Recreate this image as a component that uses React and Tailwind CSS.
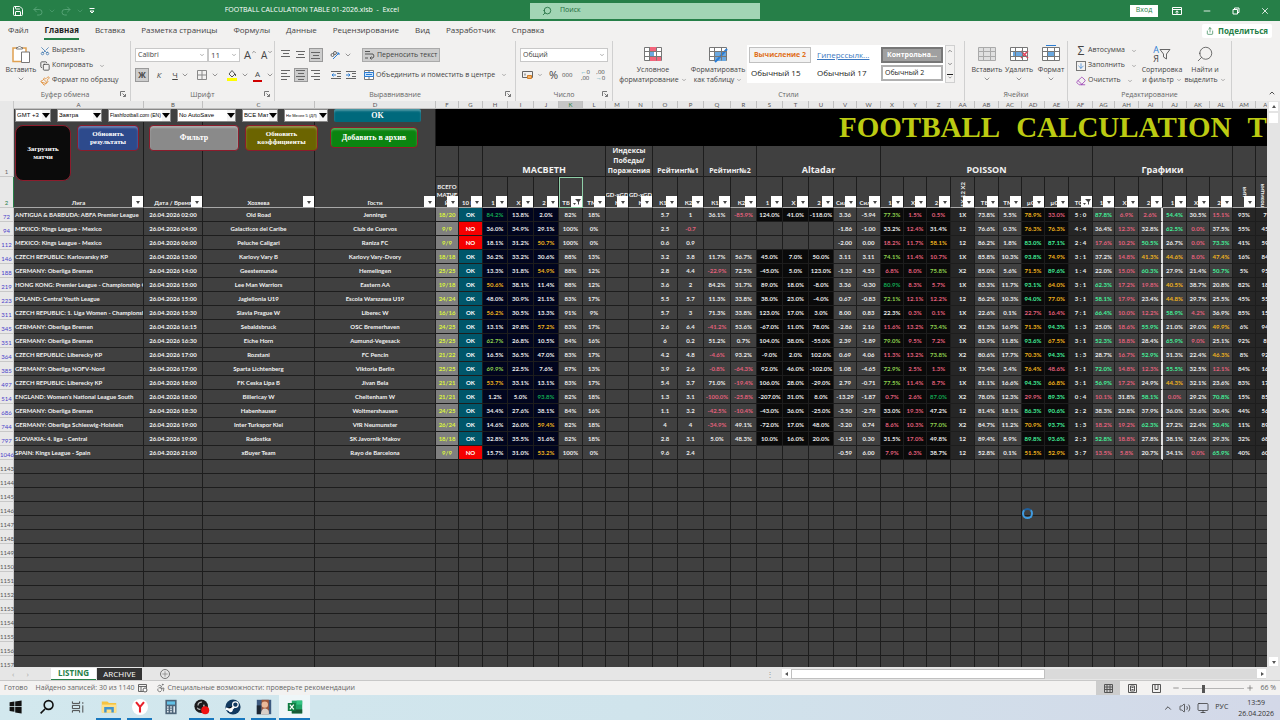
import React from 'react';
import {
  Accessibility,
  ArrowDown,
  ChevronDown,
  ChevronUp,
  Copy,
  Eraser,
  Minus,
  Monitor,
  Paintbrush,
  Plus,
  Redo2,
  Save,
  Scissors,
  Search,
  Share,
  Undo2,
  Volume2,
  X,
} from 'lucide-react';

const COLUMNS = [
  ['A', 130], ['B', 59], ['C', 112], ['D', 121], ['F', 23], ['G', 24], ['H', 25], ['I', 26], ['J', 25],
  ['K', 24], ['L', 23], ['M', 23], ['N', 24], ['O', 25], ['P', 26], ['Q', 27], ['R', 26], ['S', 26],
  ['T', 26], ['U', 25], ['V', 23], ['W', 24], ['X', 23], ['Y', 23], ['Z', 24], ['AA', 24], ['AB', 24],
  ['AC', 23], ['AD', 23], ['AE', 24], ['AF', 24], ['AG', 22], ['AH', 24], ['AI', 24], ['AJ', 24],
  ['AK', 23], ['AL', 23], ['AM', 23], ['AN', 24],
];

const SUBHEADS = [
  'Лига', 'Дата / Время', 'Хозяева', 'Гости', '', '10 И', '1', 'X', '2', 'ТБ 2', 'ТМ', '', '', 'К1', 'К2',
  'К1', 'К2', '1', 'X', '2', 'Сила', 'Сила', '1', 'X', '2', '', 'ТБ', 'ТМ', 'μG', 'μG', 'ТС', '1', 'X', '2',
  '1', 'X', '2', '', '',
];

// number | league | time | home | away | values of F..AN, "-" is an empty cell
const SOURCE = `72|ANTIGUA & BARBUDA: ABFA Premier League|02:00|Old Road|Jennings|18/20 OK 84.2% 13.8% 2.0% 82% 18% - - 5.7 1 36.1% -85.9% 124.0% 41.0% -118.0% 3.36 -5.94 77.3% 1.5% 0.5% 1X 73.8% 5.5% 78.9% 33.0% 5:0 87.8% 6.9% 2.6% 54.4% 30.5% 15.1% 93% 7%
94|MEXICO: Kings League - Mexico|04:00|Galacticos del Caribe|Club de Cuervos|9/9 NO 36.0% 34.9% 29.1% 100% 0% - - 2.5 -0.7 - - - - - -1.86 -1.00 33.2% 12.4% 31.4% 12 76.6% 0.3% 76.3% 76.3% 4:4 36.4% 12.3% 32.8% 62.5% 0.0% 37.5% 55% 45%
112|MEXICO: Kings League - Mexico|06:00|Peluche Caligari|Raniza FC|9/9 NO 18.1% 31.2% 50.7% 100% 0% - - 0.6 0.9 - - - - - -2.00 0.00 18.2% 11.7% 58.1% 12 86.2% 1.8% 83.0% 87.1% 2:4 17.6% 10.2% 50.5% 26.7% 0.0% 73.3% 41% 59%
146|CZECH REPUBLIC: Karlovarsky KP|13:00|Karlovy Vary B|Karlovy Vary-Dvory|18/18 OK 36.2% 33.2% 30.6% 88% 13% - - 3.2 3.8 11.7% 56.7% 45.0% 7.0% 50.0% 3.11 3.11 74.1% 11.4% 10.7% 1X 85.8% 10.3% 93.8% 74.9% 3:1 37.2% 14.8% 41.3% 44.6% 8.0% 47.4% 16% 84%
188|GERMANY: Oberliga Bremen|14:00|Geestemunde|Hemelingen|25/25 OK 13.3% 31.8% 54.9% 88% 12% - - 2.8 4.4 -22.9% 72.5% -45.0% 5.0% 123.0% -1.33 4.53 6.8% 8.0% 75.8% X2 85.0% 5.6% 71.5% 89.6% 1:4 22.0% 15.0% 60.3% 27.9% 21.4% 50.7% 5% 95%
219|HONG KONG: Premier League - Championship Group|15:00|Lee Man Warriors|Eastern AA|19/18 OK 50.6% 38.1% 11.4% 88% 12% - - 3.6 2 84.2% 31.7% 89.0% 18.0% -8.0% 3.36 -0.30 80.9% 8.3% 5.7% 1X 83.3% 11.7% 93.1% 64.0% 3:1 62.3% 17.2% 19.8% 40.5% 38.7% 20.8% 82% 18%
223|POLAND: Central Youth League|15:00|Jagiellonia U19|Escola Warszawa U19|24/24 OK 48.0% 30.9% 21.1% 83% 17% - - 5.5 5.7 11.3% 33.8% 38.0% 23.0% -4.0% 0.67 -0.83 72.1% 12.1% 12.2% 12 86.2% 10.3% 94.0% 77.0% 3:1 58.1% 17.9% 23.4% 44.8% 29.7% 25.5% 45% 55%
311|CZECH REPUBLIC: 1. Liga Women - Championship Group|15:30|Slavia Prague W|Liberec W|16/16 OK 56.2% 30.5% 13.3% 91% 9% - - 5.7 3 71.3% 33.8% 123.0% 17.0% 3.0% 8.00 0.83 22.3% 0.3% 0.1% 1X 22.6% 0.1% 22.7% 16.4% 7:1 66.4% 10.0% 12.2% 58.9% 4.2% 36.9% 85% 15%
345|GERMANY: Oberliga Bremen|16:15|Sebaldsbruck|OSC Bremerhaven|24/25 OK 13.1% 29.8% 57.2% 83% 17% - - 2.6 6.4 -41.2% 53.6% -67.0% 11.0% 78.0% -2.86 2.16 11.6% 13.2% 73.4% X2 81.3% 16.9% 71.3% 94.3% 1:3 25.0% 18.6% 55.9% 21.0% 29.0% 49.9% 6% 94%
351|GERMANY: Oberliga Bremen|16:30|Eiche Horn|Aumund-Vegesack|25/25 OK 62.7% 26.8% 10.5% 84% 16% - - 6 0.2 51.2% 0.7% 104.0% 38.0% -55.0% 2.39 -1.89 79.0% 9.5% 7.2% 1X 83.9% 11.8% 93.6% 67.5% 3:1 52.3% 18.8% 28.4% 65.9% 9.0% 25.1% 92% 8%
364|CZECH REPUBLIC: Liberecky KP|17:00|Rozstani|FC Pencin|21/22 OK 16.5% 36.5% 47.0% 83% 17% - - 4.2 4.8 -4.6% 93.2% -9.0% 2.0% 102.0% 0.69 4.06 11.3% 13.2% 73.8% X2 80.6% 17.7% 70.3% 94.3% 1:3 28.7% 16.7% 52.9% 31.3% 22.4% 46.3% 8% 92%
385|GERMANY: Oberliga NOFV-Nord|17:00|Sparta Lichtenberg|Viktoria Berlin|25/25 OK 69.9% 22.5% 7.6% 87% 13% - - 3.9 2.6 -0.8% -64.3% 92.0% 46.0% -102.0% 1.08 -4.65 72.9% 2.5% 1.3% 1X 73.4% 3.4% 76.4% 48.6% 5:1 72.0% 14.8% 12.3% 55.5% 32.5% 12.1% 84% 16%
497|CZECH REPUBLIC: Liberecky KP|18:00|FK Ceska Lipa B|Jivan Bela|21/21 OK 53.7% 33.1% 13.1% 83% 17% - - 5.4 3.7 71.0% -19.4% 106.0% 28.0% -29.0% 2.79 -0.71 77.5% 11.4% 8.7% 1X 81.1% 16.6% 94.3% 66.8% 3:1 56.9% 17.2% 24.9% 44.3% 32.1% 23.6% 83% 17%
514|ENGLAND: Women's National League South|18:00|Billericay W|Cheltenham W|21/21 OK 1.2% 5.0% 93.8% 82% 18% - - 1.3 3.1 -100.0% -25.8% -207.0% 31.0% 8.0% -13.29 -1.87 0.7% 2.6% 87.0% X2 78.0% 12.3% 29.9% 89.3% 0:4 10.1% 31.8% 58.1% 0.0% 29.2% 70.8% 15% 85%
686|GERMANY: Oberliga Bremen|18:30|Habenhauser|Woltmershausen|24/25 OK 34.4% 27.6% 38.1% 84% 16% - - 1.1 3.2 -42.5% -10.4% -43.0% 36.0% -25.0% -3.50 -2.78 33.0% 19.3% 47.2% 12 81.4% 18.1% 86.3% 90.6% 2:2 38.3% 23.8% 37.9% 36.0% 33.6% 30.4% 44% 56%
744|GERMANY: Oberliga Schleswig-Holstein|19:00|Inter Turkspor Kiel|VfR Neumunster|26/24 OK 14.6% 26.0% 59.4% 82% 18% - - 4 4 -34.9% 49.1% -72.0% 17.0% 48.0% -3.20 0.74 8.6% 10.3% 77.0% X2 84.7% 11.2% 70.9% 93.7% 1:3 18.2% 19.2% 62.3% 27.2% 22.4% 50.4% 11% 89%
797|SLOVAKIA: 4. liga - Central|19:00|Radostka|SK Javornik Makov|18/18 OK 32.8% 35.5% 31.6% 82% 18% - - 2.8 3.1 5.0% 48.3% 10.0% 16.0% 20.0% -0.15 0.30 31.5% 17.0% 49.8% 12 89.4% 8.9% 89.8% 93.6% 2:3 52.8% 18.8% 27.8% 38.1% 32.6% 29.3% 32% 68%
1046|SPAIN: Kings League - Spain|21:00|xBuyer Team|Rayo de Barcelona|9/9 NO 15.7% 31.0% 53.2% 100% 0% - - 9.6 2.4 - - - - - -0.59 6.00 7.9% 6.3% 38.7% 12 52.8% 0.1% 51.5% 52.9% 3:7 13.5% 5.8% 20.7% 34.1% 0.0% 65.9% 40% 60%`;

const MATCHES = SOURCE.split('\n').map((line) => {
  const [id, league, time, home, away, values] = line.split('|');
  return { id, league, time, home, away, values: values.split(' ') };
});

const EMPTY_ROWS = Array.from({ length: 15 }, (_, i) => 1143 + i);

const PINK = 'text-[#e2607c]';
const MINT = 'text-[#43f09a]';
const AMBER = 'text-[#f0b41e]';
const LIME = 'text-[#8fd14f]';
const GREEN = 'text-[#12a852]';
const WHITE = 'text-[#ececec]';

function cellStyle(col, value) {
  const n = parseFloat(value);
  if (col === 'F') return 'bg-[#7f7f7f] text-[#dcf53c]';
  if (col === 'G') return value === 'NO' ? 'bg-[#f50000] text-white' : 'bg-[#00566a] text-white';
  if ('HIJ'.includes(col)) {
    return 'bg-[#01051e] ' + (n >= 80 ? GREEN : n >= 60 ? LIME : n >= 50 ? AMBER : WHITE);
  }
  if ('PQR'.includes(col)) return 'bg-[#404040] ' + (n < 0 ? PINK : WHITE);
  if ('STU'.includes(col)) return (value === '-' ? 'bg-[#404040] ' : 'bg-[#0a0a0a] ') + WHITE;
  if ('XYZ'.includes(col)) {
    return 'bg-[#0a0a0a] ' + (n >= 80 ? GREEN : n >= 60 ? LIME : n >= 50 ? AMBER : n < 20 ? PINK : WHITE);
  }
  if (col === 'AD' || col === 'AE') return 'bg-[#0a0a0a] ' + (n >= 80 ? MINT : n >= 50 ? AMBER : PINK);
  if (['AA', 'AF', 'AM', 'AN'].includes(col)) return 'bg-[#262626] ' + WHITE;
  if (['AG', 'AH', 'AI', 'AJ', 'AK', 'AL'].includes(col)) {
    return 'bg-[#404040] ' + (n >= 50 ? MINT : n >= 40 ? AMBER : n < 20 ? PINK : WHITE);
  }
  return 'bg-[#404040] ' + WHITE;
}

function Arrow({ className = 'size-2' }) {
  return <ChevronDown className={`${className} shrink-0 text-[#666]`} strokeWidth={2} />;
}

function TitleBar() {
  return (
    <header className="flex h-[21px] shrink-0 items-center bg-[#267f48] text-[7px] text-white">
      <div className="flex flex-1 items-center">
        <button aria-label="Сохранить" className="ml-3"><Save className="size-3" strokeWidth={2} /></button>
        <button aria-label="Отменить" className="ml-2 flex items-center text-[#55a275]"><Undo2 className="size-3" /><ChevronDown className="ml-1 size-2" /></button>
        <button aria-label="Вернуть" className="ml-1 flex items-center text-[#55a275]"><Redo2 className="size-3" /><ChevronDown className="ml-1 size-2" /></button>
        <button aria-label="Настройка панели" className="ml-1">
          <svg viewBox="0 0 8 8" className="size-2" fill="none" stroke="currentColor"><path d="M1.500 1.500h5M2 4l2 2 2-2z" /></svg>
        </button>
        <span className="mr-[131px] ml-auto">FOOTBALL CALCULATION TABLE 01-2026.xlsb&nbsp; - &nbsp;Excel</span>
      </div>
      <label className="flex h-4 w-[230px] items-center gap-2 bg-[#a2d5b5] px-3 text-[#1d6b3c]">
        <Search className="size-2.5 shrink-0 -scale-x-100" strokeWidth={2} />
        <input aria-label="Поиск" placeholder="Поиск" className="w-full bg-transparent outline-none placeholder:text-[#1d6b3c]" />
      </label>
      <div className="flex w-[520px] items-center justify-end">
        <button className="h-3 w-7 bg-white text-[#267f48]">Вход</button>
        <button aria-label="Параметры ленты" className="ml-3.5">
          <svg viewBox="0 0 10 8" className="h-2 w-2.5" fill="none" stroke="currentColor"><path d="M.5.500h9v7h-9zM.500 2.500h9M5 7V4M3.500 5.200 5 3.800l1.500 1.400" /></svg>
        </button>
        <button aria-label="Свернуть" className="ml-5"><Minus className="size-2.5" /></button>
        <button aria-label="Восстановить" className="ml-5">
          <svg viewBox="0 0 8 8" className="size-2" fill="none" stroke="currentColor"><path d="M1 2.500h4.500V7H1zM2.500 2.500V1H7v4.500H5.500" /></svg>
        </button>
        <button aria-label="Закрыть" className="mr-2.5 ml-5"><X className="size-2.5" /></button>
      </div>
    </header>
  );
}

const TABS = ['Файл', 'Главная', 'Вставка', 'Разметка страницы', 'Формулы', 'Данные', 'Рецензирование', 'Вид', 'Разработчик', 'Справка'];

function TabBar() {
  return (
    <nav className="flex h-5 shrink-0 items-center gap-4 pr-2 pl-2 text-[8px] text-[#444]">
      {TABS.map((tab) => (
        <button
          key={tab}
          className={tab === 'Главная' ? 'border-b-2 border-[#267f48] leading-4 font-bold text-[#222]' : 'border-b-2 border-transparent leading-4'}
        >
          {tab}
        </button>
      ))}
      <button className="ml-auto flex h-3.5 items-center gap-1 rounded-xs bg-white px-1 font-bold text-[#267f48]">
        <Share className="size-2" />Поделиться
      </button>
    </nav>
  );
}

function Group({ title, className, launcher, children }) {
  return (
    <section className={`relative flex shrink-0 flex-col border-r border-[#d0d0d0] ${className}`}>
      <div className="flex flex-1 items-start pt-0.5">{children}</div>
      <div className="flex h-3 items-center justify-center text-[7px] text-[#666]">{title}</div>
      {launcher && (
        <button aria-label={`${title}: параметры`} className="absolute right-1 bottom-1">
          <svg viewBox="0 0 6 6" className="size-1.5" fill="none" stroke="#777"><path d="M.5 5V.500H5M2.500 2.500l3 3M5.500 3v2.500H3" /></svg>
        </button>
      )}
    </section>
  );
}

function Lines({ rows, active, label }) {
  return (
    <button aria-label={label} className={`flex size-3.5 items-center justify-center ${active ? 'border border-[#999] bg-[#cdcdcd]' : ''}`}>
      <svg viewBox="0 0 10 10" className="size-2.5 shrink-0" stroke="#666">
        {rows.map(([x, y, w]) => <path key={y} d={`M${x} ${y}.500h${w}`} />)}
      </svg>
    </button>
  );
}

function Indent({ back }) {
  return (
    <button aria-label={back ? 'Уменьшить отступ' : 'Увеличить отступ'} className="flex size-3.5 items-center justify-center">
      <svg viewBox="0 0 10 10" className="size-2.5" fill="none" stroke="#666">
        <path d="M0 1.500h10M6 3.500h4M6 6.500h4M0 8.500h10" />
        <path stroke="#2b7cd3" d={back ? 'M5 5H1M2.500 3.500 1 5l1.500 1.500' : 'M0 5h4M2.500 3.500 4 5 2.500 6.500'} />
      </svg>
    </button>
  );
}

// small spreadsheet grid with optional coloured parts
function GridIcon({ children, gray }) {
  return (
    <svg viewBox="0 0 20 18" className="h-[18px] w-5" fill="none" stroke={gray ? '#aaa' : '#777'}>
      <path fill={gray ? '#e0e0e0' : '#fff'} d="M1.500 2.500h17v13h-17z" />
      {children}
      <path d="M1.500 6.500h17M1.500 11.500h17M6.500 2.500v13M13.500 2.500v13" />
    </svg>
  );
}

function BigButton({ icon, lines, className = '', arrowBelow }) {
  return (
    <button className={`flex shrink-0 flex-col items-center pt-0.5 text-[7px] leading-[10px] text-[#444] ${className}`}>
      {icon}
      <span className="mt-0.5 whitespace-nowrap">{lines[0]}</span>
      {arrowBelow ? <Arrow /> : <span className="flex items-center gap-0.5 whitespace-nowrap">{lines[1]}<Arrow className="size-1.5" /></span>}
    </button>
  );
}

function SmallButton({ icon, children, arrow }) {
  return (
    <button className="flex h-[15px] items-center gap-0.5 text-[7px] whitespace-nowrap text-[#444]">
      {icon}
      {children}
      {arrow && <Arrow className="ml-1 size-1.5" />}
    </button>
  );
}

function Ribbon() {
  return (
    <div className="flex h-[60px] shrink-0 overflow-hidden">
      <Group title="Буфер обмена" className="w-[131px]" launcher>
        <BigButton
          className="w-[38px] pl-1"
          arrowBelow
          lines={['Вставить']}
          icon={
            <svg viewBox="0 0 18 18" className="size-[18px]" fill="#fff">
              <path stroke="#e0a050" strokeWidth="1.500" d="M1 3h13v13.500H1z" />
              <path stroke="#777" d="M4.500 4V2.500H6q1.500-3 3 0h1.500V4z" />
              <path stroke="#777" d="M9.500 7h8v10.500h-8z" />
            </svg>
          }
        />
        <div className="ml-0.5 flex flex-col">
          <SmallButton icon={<Scissors className="size-2.5 -rotate-90 text-[#4a7fb5]" />}>Вырезать</SmallButton>
          <SmallButton arrow icon={<Copy className="size-2.5" />}>Копировать</SmallButton>
          <SmallButton icon={<Paintbrush className="size-2.5 text-[#e08a30]" />}>Формат по образцу</SmallButton>
        </div>
      </Group>

      <Group title="Шрифт" className="w-36" launcher>
        <div className="flex flex-col gap-1.5 pt-[5px] pl-1 text-[8px] text-[#444]">
          <div className="flex h-3.5 items-center">
            <label className="relative flex h-3.5 w-[73px] items-center border border-[#c8c8c8] bg-white text-[7px]">
              <select aria-label="Шрифт" className="w-full appearance-none bg-transparent pl-0.5 outline-none"><option>Calibri</option></select>
              <Arrow className="absolute right-0.5 size-1.5" />
            </label>
            <label className="relative flex h-3.5 w-8 items-center border border-[#c8c8c8] bg-white">
              <select aria-label="Размер шрифта" className="w-full appearance-none bg-transparent pl-0.5 outline-none"><option>11</option></select>
              <Arrow className="absolute right-0.5 size-1.5" />
            </label>
            <button aria-label="Увеличить размер" className="ml-1 flex text-[11px] leading-3">A<ChevronUp className="size-1.5" /></button>
            <button aria-label="Уменьшить размер" className="ml-1 flex text-[10px] leading-3">A<ChevronDown className="size-1.5" /></button>
          </div>
          <div className="flex h-3.5 items-center">
            <button className="size-3.5 border border-[#999] bg-[#cdcdcd] leading-3 font-bold">Ж</button>
            <button className="ml-1 w-3 italic">К</button>
            <button className="ml-1 w-3 underline">Ч</button>
            <Arrow />
            <button aria-label="Границы" className="ml-2 flex items-center gap-1">
              <svg viewBox="0 0 10 10" className="size-2.5" fill="none" stroke="#888"><path d="M.5.500h9v9h-9zM5 .500v9M.500 5h9" /></svg>
              <Arrow />
            </button>
            <button aria-label="Цвет заливки" className="ml-2 flex items-center gap-1">
              <svg viewBox="0 0 10 12" className="h-3 w-2.5" fill="none" stroke="#555"><path d="M2 5l3-3.500L8 5 5 8zM8.500 5v2" /><path fill="#ff0" stroke="none" d="M0 9h10v3H0z" /></svg>
              <Arrow />
            </button>
            <button aria-label="Цвет текста" className="ml-1 flex items-center gap-1">
              <span className="h-3.5 border-b-2 border-[#d00000] px-0.5 leading-3">A</span>
              <Arrow />
            </button>
          </div>
        </div>
      </Group>

      <Group title="Выравнивание" className="w-[241px]" launcher>
        <div className="flex flex-col gap-1.5 pt-[5px] pl-1">
          <div className="flex h-3.5 items-center gap-px">
            <Lines label="По верхнему краю" rows={[[0, 0, 9], [2, 3, 6], [0, 6, 9]]} />
            <Lines label="По середине" rows={[[0, 1, 9], [2, 4, 6], [0, 7, 9]]} />
            <Lines label="По нижнему краю" active rows={[[0, 2, 9], [2, 5, 6], [0, 8, 9]]} />
            <button aria-label="Ориентация" className="ml-1.5 flex items-center gap-1">
              <svg viewBox="0 0 10 10" className="size-2.5" fill="none" stroke="#666"><circle cx="2.500" cy="5" r="1.500" /><circle cx="5" cy="3" r="1.500" /><path stroke="#2b7cd3" d="M3 9l6-6M7 3h2v2" /></svg>
              <Arrow />
            </button>
          </div>
          <div className="flex h-3.5 items-center gap-px">
            <Lines label="По левому краю" rows={[[0, 0, 9], [0, 3, 6], [0, 6, 9], [0, 9, 6]]} />
            <Lines label="По центру" active rows={[[0, 0, 9], [2, 3, 6], [0, 6, 9], [2, 9, 6]]} />
            <Lines label="По правому краю" rows={[[0, 0, 9], [3, 3, 6], [0, 6, 9], [3, 9, 6]]} />
            <span className="w-1" />
            <Indent back />
            <Indent />
          </div>
        </div>
        <div className="ml-1 flex flex-col items-start gap-1.5 pt-[5px] text-[7px] whitespace-nowrap text-[#444]">
          <button className="flex h-3.5 items-center gap-0.5 border border-[#aaa] bg-[#cdcdcd] px-0.5">
            <svg viewBox="0 0 10 10" className="size-2.5" fill="none" stroke="#555"><path d="M0 1.500h5M0 4h8q2 2 0 4H5M6.500 6.500 5 8l1.500 1.500M0 8h3" /></svg>
            Переносить текст
          </button>
          <button className="flex h-3.5 items-center gap-0.5 px-0.5">
            <svg viewBox="0 0 10 10" className="size-2.5" fill="#fff" stroke="#777"><path d="M.5.500h9v9h-9zM5 .500v2M5 7v2.500" /><path fill="#cfe4f7" stroke="#2b7cd3" d="M.5 2.500h9v4h-9zM2 4.500h6" /></svg>
            Объединить и поместить в центре
            <Arrow className="ml-1 size-1.5" />
          </button>
        </div>
      </Group>

      <Group title="Число" className="w-[97px]" launcher>
        <div className="flex flex-col gap-1.5 pt-[5px] pl-1 text-[7px] text-[#444]">
          <label className="relative flex h-3.5 w-[88px] items-center border border-[#c8c8c8] bg-white">
            <select aria-label="Числовой формат" className="w-full appearance-none bg-transparent pl-0.5 outline-none"><option>Общий</option></select>
            <Arrow className="absolute right-0.5 size-1.5" />
          </label>
          <div className="flex h-3.5 items-center pl-0.5">
            <svg viewBox="0 0 11 10" className="h-2.5 w-[11px]" fill="none" stroke="#666"><path d="M.5 1.500h10v6H.500zM3 3.500v2" /><path fill="#f7b267" stroke="#d0802c" d="M5.500 5.500h4v3h-4z" /></svg>
            <Arrow className="ml-1 size-1.5" />
            <button className="ml-1.5 text-[11px]">%</button>
            <button className="ml-1 text-[6px]">000</button>
            <button className="ml-2 text-[6px] leading-[6px]"><span className="text-[#2b9ab0]">←</span>0<br />,00</button>
            <button className="ml-1.5 text-[6px] leading-[6px]">,00<br /><span className="text-[#2b9ab0]">→</span>0</button>
          </div>
        </div>
      </Group>

      <Group title="Стили" className="w-[352px]">
        <BigButton
          className="w-20"
          lines={['Условное', 'форматирование']}
          icon={<GridIcon><path fill="#f2647a" stroke="none" d="M7 2h7v4H7zM7 12h11v4H7z" /><path fill="#6aa8e0" stroke="none" d="M7 7h4v4H7z" /></GridIcon>}
        />
        <BigButton
          className="w-[50px]"
          lines={['Форматировать', 'как таблицу']}
          icon={<GridIcon><path fill="#6aa8e0" stroke="none" d="M7 7h11v9H7z" /><path stroke="#2b7cd3" strokeWidth="2" d="M19 4l-9 10-3 3" /></GridIcon>}
        />
        <div className="mt-0.5 ml-1 flex bg-white text-[8px] text-[#222]">
          <div className="grid w-[198px] grid-cols-3 gap-x-1 gap-y-0.5 px-0.5 py-0.5">
            <button className="h-4 border border-[#c0c0c0] bg-[#f2f2f2] text-[7px] leading-3 font-bold whitespace-nowrap text-[#e0701c]">Вычисление 2</button>
            <button className="h-4 px-0.5 text-left whitespace-nowrap text-[#3c78c0] underline">Гиперссылк...</button>
            <button className="h-4 border-2 border-[#777] bg-[#a0a0a0] text-[7px] leading-3 font-bold whitespace-nowrap text-white">Контрольна...</button>
            <button className="h-4 px-0.5 text-left">Обычный 15</button>
            <button className="h-4 px-0.5 text-left">Обычный 17</button>
            <button className="h-4 border-2 border-[#b0b0b0] px-0.5 text-left text-[7px] leading-3">Обычный 2</button>
          </div>
          <div className="flex w-2.5 flex-col items-center justify-between border border-[#d0d0d0] bg-[#f3f2f1] py-0.5">
            <button aria-label="Выше"><ChevronUp className="size-1.5" /></button>
            <button aria-label="Ниже"><ChevronDown className="size-1.5" /></button>
            <button aria-label="Все стили"><ChevronDown className="size-1.5 border-t" /></button>
          </div>
        </div>
      </Group>

      <Group title="Ячейки" className="w-[103px]">
        <div className="flex pl-1.5">
          <BigButton className="w-8" arrowBelow lines={['Вставить']} icon={<GridIcon gray />} />
          <BigButton
            className="w-8"
            arrowBelow
            lines={['Удалить']}
            icon={<GridIcon><path fill="#6aa8e0" stroke="none" d="M4 7h9v4H4z" /><path stroke="#e0405a" strokeWidth="1.500" d="M12 6l7 7M19 6l-7 7" /></GridIcon>}
          />
          <BigButton
            className="w-8"
            arrowBelow
            lines={['Формат']}
            icon={<GridIcon><path fill="#6aa8e0" stroke="none" d="M6 7h8v4H6z" /><path stroke="#2b7cd3" d="M5 .500h10" /></GridIcon>}
          />
        </div>
      </Group>

      <Group title="Редактирование" className="w-[164px]">
        <div className="flex w-[71px] shrink-0 flex-col pl-2">
          <SmallButton arrow icon={<span className="w-2.5 text-[12px] leading-3">Σ</span>}>Автосумма</SmallButton>
          <SmallButton arrow icon={<ArrowDown className="size-2.5 shrink-0 border border-[#777] text-[#2b7cd3]" />}>Заполнить</SmallButton>
          <SmallButton arrow icon={<Eraser className="size-2.5 shrink-0 text-[#9b3fb5]" />}>Очистить</SmallButton>
        </div>
        <BigButton
          className="w-[46px]"
          lines={['Сортировка', 'и фильтр']}
          icon={
            <span className="flex h-[18px] items-center">
              <span className="flex flex-col text-[9px] leading-[9px]"><span className="text-[#2b7cd3]">А</span><span>Я</span></span>
              <svg viewBox="0 0 12 12" className="size-3" fill="none" stroke="#666"><path d="M1 1.500h10L7.500 6v5l-3-2V6z" /></svg>
            </span>
          }
        />
        <BigButton className="w-10" lines={['Найти и', 'выделить']} icon={<Search className="size-[18px] -scale-x-100" strokeWidth={1} />} />
      </Group>
      <button aria-label="Свернуть ленту" className="mt-auto mr-1 mb-1 ml-auto"><ChevronUp className="size-2" /></button>
    </div>
  );
}

function SheetSelect({ label, value, className }) {
  return (
    <label className={`relative flex h-[13px] items-center border border-[#888] bg-white text-black ${className}`}>
      <select aria-label={label} className="w-full appearance-none bg-transparent pr-2 pl-px outline-none"><option>{value}</option></select>
      <span className="pointer-events-none absolute right-0 flex h-full w-2 items-center justify-center bg-[#f4f4f4]">
        <svg viewBox="0 0 8 5" className="h-[5px] w-2"><path d="M0 0h8L4 5z" /></svg>
      </span>
    </label>
  );
}

function Controls() {
  const button = 'rounded-sm border border-[#8c1c2c] text-white shadow-[inset_0_2px_2px_rgba(255,255,255,0.3)]';
  return (
    <div className="absolute top-2 left-[15px] flex flex-col gap-[3px]">
      <div className="flex items-center gap-1.5 font-['Liberation_Sans',sans-serif] text-[6px]">
        <SheetSelect label="Часовой пояс" value="GMT +3" className="w-9" />
        <SheetSelect label="День" value="Завтра" className="w-[45px]" />
        <SheetSelect label="Источник" value="Flashfootball.com (EN)" className="w-[63px] text-[5px]" />
        <SheetSelect label="Автосохранение" value="No AutoSave" className="w-[59px]" />
        <SheetSelect label="Матчи" value="ВСЕ Мат" className="w-9" />
        <SheetSelect label="Минимум игр" value="Не Менее 5 (ДЛ)" className="w-11 text-[4px]" />
        <button className="h-[13px] w-[87px] rounded-xs bg-[#00697c] font-['Liberation_Serif',serif] text-[8px] font-bold text-white shadow-[inset_0_2px_2px_rgba(255,255,255,0.3)]">OK</button>
      </div>
      <div className="flex items-start font-['Liberation_Serif',serif] text-[7px] leading-2 font-bold">
        <button className="h-14 w-14 rounded-lg border border-[#8c1c2c] bg-[#0b0b0b] text-white">Загрузить<br />матчи</button>
        <button className={`ml-1.5 h-[26px] w-[62px] bg-[#2d4a8c] ${button}`}>Обновить<br />результаты</button>
        <button className={`ml-2.5 h-[26px] w-[90px] bg-[#8a8a8a] text-[8px] ${button}`}>Фильтр</button>
        <button className={`ml-1.5 h-[26px] w-[73px] bg-[#6b6400] ${button}`}>Обновить<br />коэффициенты</button>
        <button className={`mt-0.5 ml-3 h-[21px] w-[88px] bg-[#0b8410] text-[8px] ${button}`}>Добавить в архив</button>
      </div>
    </div>
  );
}

const GROUPS = [
  ['', 1], ['', 1], ['MACBETH', 5, 'text-[9px]'], ['Индексы Победы/ Поражения', 2, 'text-[7px] leading-[10px]'],
  ['Рейтинг№1', 2, 'text-[7px]'], ['Рейтинг№2', 2, 'text-[7px]'], ['Altadar', 5, 'text-[9px]'],
  ['POISSON', 9, 'text-[9px]'], ['Графики', 6, 'text-[9px]'], ['', 1], ['', 1],
];

const EDGE = 'border-r border-b border-[#1d1d1d]';
const ROW_HEAD = 'border-r border-b border-[#c8c8c8] bg-[#e8e8e8] p-0 text-[6px] font-normal align-bottom leading-[8px]';

function FilterButton({ col }) {
  const active = col === 'K' || col === 'AF';
  return (
    <button aria-label={`Фильтр ${col}`} className="absolute right-0 bottom-0 flex size-[11px] items-center justify-center bg-white">
      <svg viewBox="0 0 8 8" className="size-2" fill="#444">
        {active ? <path d="M2 1h6L6 4v3L5 6V4zM0 5h3L1.500 7z" /> : <path d="M2 3h4L4 6z" />}
      </svg>
    </button>
  );
}

function SubHead({ col, text }) {
  let label = <span className={col > 'E' || col.length > 1 ? 'pr-1 whitespace-nowrap' : ''}>{text}</span>;
  if (col === 'F') label = <span>ВСЕГО<br />МАТЧЕ<br />Й</span>;
  if (col === 'M' || col === 'N') label = <span className="whitespace-nowrap">GD-xGD<br />К</span>;
  if (col === 'AA') label = <span className="inline-block rotate-180 whitespace-nowrap [writing-mode:vertical-rl]">1X 12 X2</span>;
  if (col === 'AM') label = <span className="mb-2.5 inline-block rotate-180 [writing-mode:vertical-rl]">ция</span>;
  if (col === 'AN') label = <span className="mr-3 inline-block rotate-180 [writing-mode:vertical-rl]">позиция</span>;
  return (
    <th className={`p-0 align-bottom ${EDGE} border-b-[#a8a8a8] ${col === 'K' ? 'outline outline-[#8fcfa8] -outline-offset-1' : ''}`}>
      <div className="relative flex h-[30px] items-end justify-center overflow-hidden text-[6px] leading-2 font-bold">
        {label}
        <FilterButton col={col} />
      </div>
    </th>
  );
}

function Sheet() {
  return (
    <div className="relative min-w-0 flex-1 overflow-hidden bg-[#404040]">
      <table className="w-[1280px] table-fixed border-separate border-spacing-0 font-['Lato','Open_Sans',sans-serif] text-[6px] text-[#f2f2f2]">
        <colgroup>
          <col className="w-3.5" />
          {COLUMNS.map(([name, width]) => <col key={name} style={{ width }} />)}
        </colgroup>
        <thead>
          <tr className="h-2 bg-[#e8e8e8] text-[#555]">
            <th className="border-r border-[#c8c8c8] p-0" />
            {COLUMNS.map(([name]) => (
              <th key={name} className={`border-r border-b border-[#c0c0c0] p-0 leading-[7px] font-normal ${name === 'K' ? 'bg-[#c6c6c6] text-[#267f48]' : ''}`}>{name}</th>
            ))}
          </tr>
          <tr className="h-[37px]">
            <th rowSpan={2} className={`${ROW_HEAD} text-[#666]`}>1</th>
            {['A', 'B', 'C', 'D'].map((name) => <td key={name} rowSpan={2} className="border-r border-[#1d1d1d] p-0" />)}
            <th colSpan={35} className="bg-black p-0 pl-[403px] text-left">
              <div className="flex gap-4 font-['Liberation_Serif',serif] text-[29px] leading-[37px] font-bold whitespace-nowrap text-[#bccb12]">
                <span>FOOTBALL</span><span>CALCULATION</span><span>T</span>
              </div>
            </th>
          </tr>
          <tr className="h-[31px] font-['Open_Sans','Noto_Sans',sans-serif]">
            {GROUPS.map(([title, span, size], i) => (
              <th key={i} colSpan={span} className={`p-0 align-bottom font-bold ${EDGE}`}>
                <div className={`flex h-[30px] items-end justify-center px-0.5 text-center ${size || ''}`}>{title}</div>
              </th>
            ))}
          </tr>
          <tr className="h-[31px]">
            <th className={`${ROW_HEAD} border-r-[#267f48] bg-[#d0d0d0] text-[#267f48]`}>2</th>
            {COLUMNS.map(([name], i) => <SubHead key={name} col={name} text={SUBHEADS[i]} />)}
          </tr>
        </thead>
        <tbody>
          {MATCHES.map((m) => (
            <tr key={m.id} className="h-3.5 text-center font-bold">
              <th className={`${ROW_HEAD} text-[#4a3fc8]`}>{m.id}</th>
              <td className={`overflow-hidden p-0 pl-px text-left leading-3 whitespace-nowrap ${EDGE}`}>{m.league}</td>
              <td className={`p-0 leading-3 whitespace-nowrap ${EDGE}`}>26.04.2026 {m.time}</td>
              <td className={`p-0 leading-3 whitespace-nowrap ${EDGE}`}>{m.home}</td>
              <td className={`p-0 leading-3 whitespace-nowrap ${EDGE}`}>{m.away}</td>
              {m.values.map((value, i) => {
                const col = COLUMNS[i + 4][0];
                return (
                  <td
                    key={col}
                    className={`border-b p-0 leading-3 whitespace-nowrap ${cellStyle(col, value)} ${col === 'AI' ? 'border-r-2 border-r-[#e0e0e0] border-b-[#1d1d1d]' : 'border-r border-[#1d1d1d]'}`}
                  >
                    {value === '-' ? '' : value.replace(':', ' : ')}
                  </td>
                );
              })}
            </tr>
          ))}
          {EMPTY_ROWS.map((n) => (
            <tr key={n} className="h-3.5">
              <th className={`${ROW_HEAD} text-[#555]`}>{n}</th>
              {COLUMNS.map(([name]) => <td key={name} className={`p-0 ${EDGE}`} />)}
            </tr>
          ))}
        </tbody>
      </table>
      <Controls />
      <span className="absolute top-[407px] left-[1022px] size-[11px] rounded-full border-2 border-[#3f9be0] border-t-[#1f5f9c]" />
    </div>
  );
}

function ScrollButton({ label, d }) {
  return (
    <button aria-label={label} className="flex size-[9px] shrink-0 items-center justify-center bg-white">
      <svg viewBox="0 0 6 6" className="size-1.5" fill="#555"><path d={d} /></svg>
    </button>
  );
}

function SheetTabs() {
  return (
    <div className="flex h-3.5 shrink-0 items-center border-b border-[#c8c8c8] bg-[#e6e6e6] text-[8px]">
      <div className="flex w-[51px] gap-3 pl-3 text-[8px] text-[#aaa]"><span>‹</span><span>›</span></div>
      <button className="h-3 w-[45px] border-b border-[#267f48] bg-white leading-[10px] font-bold text-[#267f48]">LISTING</button>
      <button className="ml-px h-3 w-[45px] bg-[#333] leading-[10px] text-white">ARCHIVE</button>
      <button aria-label="Новый лист" className="ml-[18px] flex size-2.5 items-center justify-center rounded-full border border-[#777] text-[#777]"><Plus className="size-2" /></button>
      <span className="ml-auto text-[#999]">⋮</span>
      <div className="ml-2 flex w-[484px] items-center bg-[#dadada]">
        <ScrollButton label="Влево" d="M4 1v4L1 3z" />
        <span className="h-2.5 w-[254px] border border-[#c0c0c0] bg-white" />
        <span className="ml-auto"><ScrollButton label="Вправо" d="M2 1v4l3-2z" /></span>
      </div>
      <span className="w-3.5" />
    </div>
  );
}

function StatusBar() {
  return (
    <footer className="flex h-3.5 shrink-0 items-center bg-[#f3f2f1] text-[7px] text-[#666]">
      <span className="ml-1">Готово</span>
      <span className="ml-2">Найдено записей: 30 из 1140</span>
      <svg viewBox="0 0 10 10" className="ml-1 size-2.5" fill="none" stroke="#666"><path d="M.5 1.500h8v7h-8zM.500 3.500h8M3 3.500v5" /><circle cx="7" cy="7" r="2" fill="#fff" /></svg>
      <button className="ml-2 flex items-center gap-px"><Accessibility className="size-2.5" />Специальные возможности: проверьте рекомендации</button>
      <div className="ml-auto flex h-full items-center">
        <button aria-label="Обычный" className="flex h-full w-6 items-center justify-center bg-[#cdcdcd]">
          <svg viewBox="0 0 9 9" className="size-[9px]" fill="none" stroke="#555"><path d="M.5.500h8v8h-8zM.500 3h8M.500 5.500h8M3 .500v8M6 .500v8" /></svg>
        </button>
        <button aria-label="Разметка страницы" className="flex w-6 justify-center">
          <svg viewBox="0 0 9 9" className="size-[9px]" fill="none" stroke="#555"><path d="M.5.500h8v8h-8zM2.500 2h4v5h-4zM3.500 3.500h2M3.500 5.500h2" /></svg>
        </button>
        <button aria-label="Страничный" className="flex w-6 justify-center">
          <svg viewBox="0 0 9 9" className="size-[9px]" fill="none" stroke="#555"><path d="M.5.500h8v8h-8zM3 .500v5h3v-5" /></svg>
        </button>
        <Minus className="ml-1 size-2" />
        <div className="relative mx-0.5 h-2.5 w-[62px]">
          <input type="range" aria-label="Масштаб" defaultValue={30} className="absolute inset-0 w-full opacity-0" />
          <div className="flex h-full items-center"><span className="h-px w-full bg-[#b5b5b5]" /></div>
          <span className="absolute top-0.5 left-5 h-2 w-[3px] bg-[#555]" />
        </div>
        <Plus className="size-2" />
        <span className="mr-1 ml-1.5">66 %</span>
      </div>
    </footer>
  );
}

const APPS = [
  { name: 'Пуск', icon: <path fill="#111" d="M2 4l6-1v6H2zM9 3l8-1v7H9zM2 10h6v6l-6-1zM9 10h8v8l-8-1z" /> },
  { name: 'Поиск', icon: <path fill="none" stroke="#111" strokeWidth="2" d="M7.500 12.500 2 18M12 2a5.500 5.500 0 1 1 0 11 5.500 5.500 0 0 1 0-11z" /> },
  { name: 'Представление задач', icon: <path fill="none" stroke="#444" strokeWidth="1.200" d="M3 3v2.500h9V3M3 17v-2.500h9V17M3 8h9v4H3zM16 4v2M16 8v9" /> },
  { name: 'Проводник', open: true, icon: <><path fill="#f5c342" d="M1 3h7l2 2h9v12H1z" /><path fill="#fde08a" d="M1 7h18v10H1z" /><path fill="#3f93cf" d="M4 10h12v7h-3v-4H7v4H4z" /></> },
  { name: 'Яндекс', open: true, icon: <><circle cx="10" cy="10" r="10" fill="#fff" /><path fill="none" stroke="#e8212c" strokeWidth="2.600" d="M5 4l5 6 5-6M10 10v7" /></> },
  { name: 'Калькулятор', icon: <><path fill="#4d6579" d="M3 1h14v18H3z" /><path fill="#62c2e8" d="M5 3h10v4H5z" /><path fill="#dfe8ee" d="M5 9h2v2H5zM9 9h2v2H9zM5 12h2v2H5zM9 12h2v2H9zM5 15h2v2H5zM9 15h2v2H9zM13 9h2v8h-2z" /></> },
  { name: 'OBS', open: true, icon: <><circle cx="9" cy="9" r="8.500" fill="#1b1b1d" /><path fill="none" stroke="#bbb" strokeWidth="1.500" d="M5 8a4 4 0 0 1 5-4M12 7a4 4 0 0 1-1 5M8 13a4 4 0 0 1-4-2" /><circle cx="14" cy="14" r="5" fill="#ef1010" /></> },
  { name: 'Steam', open: true, icon: <><circle cx="10" cy="10" r="9.500" fill="#12395f" /><path stroke="#fff" strokeWidth="3" d="M1 12l6 2 6-6" /><circle cx="13" cy="7" r="3.500" fill="#12395f" stroke="#fff" strokeWidth="1.500" /><circle cx="7" cy="14" r="2.500" fill="#fff" /></> },
  { name: 'Фото', open: true, icon: <><path fill="#3d5a80" d="M1 1h18v18H1z" /><path fill="#a0583a" d="M7 1h9v18H7z" /><circle cx="11" cy="7" r="4" fill="#eab999" /><path fill="#d9cfc8" d="M6 19q1-8 6-7 5 1 4 7z" /><path fill="#1d2733" d="M1 8h5v11H1z" /></> },
];

function Taskbar() {
  return (
    <div className="flex h-[25px] shrink-0 items-center bg-gradient-to-r from-[#d2e8ee] via-[#d0e4ec] to-[#d3d8e8] text-[7px] text-[#333]">
      {APPS.map(({ name, open, icon }) => (
        <button key={name} aria-label={name} className="flex h-full w-[31px] flex-col items-center justify-end">
          <svg viewBox="0 0 20 20" className="my-auto size-4">{icon}</svg>
          <span className={`h-0.5 w-[25px] ${open ? 'bg-[#1878bf]' : ''}`} />
        </button>
      ))}
      <button aria-label="Excel" className="flex h-full w-[31px] flex-col items-center justify-end border-b-2 border-[#1878bf] bg-[#eef6f8]">
        <svg viewBox="0 0 20 20" className="my-auto size-4">
          <path fill="#21a366" d="M6 2h13v16H6z" /><path fill="#33c481" d="M12 2h7v5h-7z" /><path fill="#185c37" d="M6 13h13v5H6z" />
          <path fill="#107c41" d="M1 5h10v10H1z" /><path stroke="#fff" strokeWidth="1.600" d="M3.500 7l5 6M8.500 7l-5 6" />
        </svg>
      </button>
      <div className="ml-auto flex items-center gap-1.5 pr-1.5">
        <ChevronUp className="size-2.5" />
        <Volume2 className="size-3" strokeWidth={1.5} />
        <Monitor className="size-3" strokeWidth={1.5} />
        <span>РУС</span>
        <div className="ml-1 text-center leading-[11px]">13:59<br />26.04.2026</div>
      </div>
    </div>
  );
}

export default function App() {
  return (
    <div className="flex h-screen flex-col overflow-hidden bg-[#f2f1f0] font-['Open_Sans','Noto_Sans',sans-serif]">
      <TitleBar />
      <TabBar />
      <Ribbon />
      <main className="flex min-h-0 flex-1">
        <Sheet />
        <div className="flex w-[13px] shrink-0 flex-col items-center gap-0.5 bg-[#e4e4e4] py-px">
          <ScrollButton label="Вверх" d="M1 4h4L3 1z" />
          <span className="h-2.5 w-[9px] bg-white" />
          <span className="mt-auto"><ScrollButton label="Вниз" d="M1 2h4L3 5z" /></span>
        </div>
      </main>
      <SheetTabs />
      <StatusBar />
      <Taskbar />
    </div>
  );
}
